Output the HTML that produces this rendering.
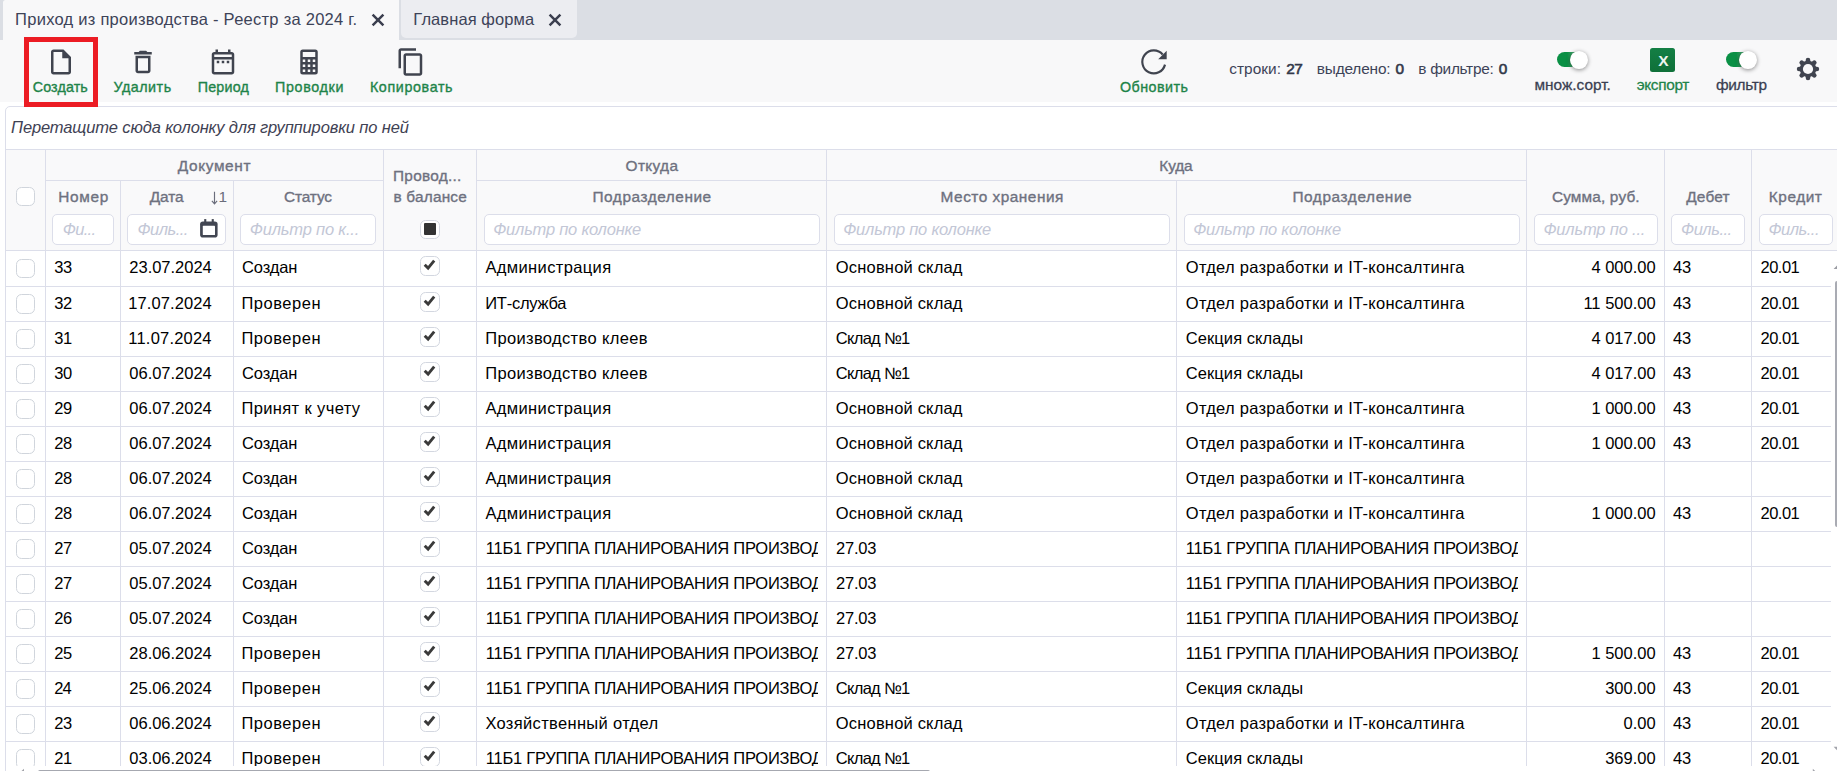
<!DOCTYPE html>
<html lang="ru"><head><meta charset="utf-8"><title>Приход из производства</title>
<style>
html,body{margin:0;padding:0}
body{width:1837px;height:771px;overflow:hidden;position:relative;background:#fff;font-family:"Liberation Sans",sans-serif;color:#000}
div,span,svg{position:absolute;box-sizing:border-box}
span{white-space:pre}
.ic{display:block}
.tabbar{left:0;top:0;width:1837px;height:40px;background:#dbdee4}
.tab1{left:3px;top:0;width:396px;height:40px;background:#f8f8f9;border-radius:2.5px 0 0 0}
.tab2{left:400.5px;top:0;width:176.5px;height:37.8px;background:#ecedf1;border-radius:0 0 5px 5px}
.tab{font-size:16.5px;color:#3d4358;line-height:20px}
.toolbar{left:0;top:40px;width:1837px;height:62px;background:#f8f8f9}
.lbl{font-size:14.3px;color:#1e8449;line-height:18px;-webkit-text-stroke:.35px}
.lbl2{font-size:15.4px;line-height:18px;color:#3a3f52;-webkit-text-stroke:.28px}
.grn{color:#1e8449}
.stat{font-size:15.4px;color:#3d4358;line-height:18px}
.statb{font-size:15.4px;color:#33384a;line-height:18px;-webkit-text-stroke:.6px}
.sn{font-size:15.4px;line-height:20px;color:#6a6d7b}
.xl{font-size:15.5px;font-weight:bold;color:#eef5f0;line-height:20px}
.redbox{left:24px;top:37px;width:74px;height:70px;border:5px solid #ec1c24}
.grid{left:5px;top:106px;width:1840px;height:680px;border:1px solid #dcdeea;border-radius:5px 0 0 0;background:#fff}
.gp{font-size:16.5px;font-style:italic;color:#3f4254;line-height:20px}
.hdr{left:6px;top:149px;width:1831px;height:102px;background:#f9f9fa;border-top:1px solid #dcdeea}
.vl{width:1px;background:#dcdeea}
.hl{height:1px;background:#dcdeea}
.ht{font-size:15.4px;color:#6e717f;line-height:20px;-webkit-text-stroke:.35px}
.fb{top:214px;height:30.6px;border:1px solid #dcdeea;border-radius:5px;background:#fff}
.ph{font-size:16.5px;font-style:italic;color:#c3c7d6;line-height:20px}
.cb{width:18.7px;height:19.8px;border:1px solid #d0d5dc;border-radius:5.5px;background:#fff}
.ck{width:19.4px;height:19.5px;border:1px solid #d3d7e0;border-radius:5.5px;background:#fff}
.c{font-size:16.5px;line-height:20px}
.clip{overflow:hidden;height:30px}
</style></head><body>

<div class="tabbar"></div><div class="tab1"></div><div class="tab2"></div>
<span class="tab" style="left:15.1px;top:9.38px;letter-spacing:0.26px">Приход из производства - Реестр за 2024 г.</span>
<span class="tab" style="left:413.3px;top:9.38px;letter-spacing:0.08px">Главная форма</span>
<svg class="ic" style="left:370.5px;top:12.6px;width:14px;height:14px" viewBox="0 0 14 14"><path d="M1.6 1.7L12.4 12.3M12.4 1.7L1.6 12.3" stroke="#3b3f4f" stroke-width="2.5" fill="none"/></svg>
<svg class="ic" style="left:548.3px;top:12.6px;width:14px;height:14px" viewBox="0 0 14 14"><path d="M1.6 1.7L12.4 12.3M12.4 1.7L1.6 12.3" stroke="#3b3f4f" stroke-width="2.5" fill="none"/></svg>
<div class="toolbar"></div>
<svg class="ic" style="left:45.90px;top:46.75px;width:30px;height:30px" viewBox="0 0 24 24" fill="#40444f"><path d="M14 2H6c-1.1 0-1.99.9-1.99 2L4 20c0 1.1.89 2 1.99 2H18c1.1 0 2-.9 2-2V8l-6-6zM6 20V4h7v5h5v11H6z"/></svg>
<span class="lbl" style="left:32.8px;top:77.75px;letter-spacing:0.10px">Создать</span>
<svg class="ic" style="left:128.00px;top:46.75px;width:30px;height:30px" viewBox="0 0 24 24" fill="#40444f"><path d="M6 19c0 1.1.9 2 2 2h8c1.1 0 2-.9 2-2V7H6v12zM8 9h8v10H8V9zm7.5-5l-1-1h-5l-1 1H5v2h14V4h-3.5z"/></svg>
<span class="lbl" style="left:113.4px;top:77.75px;letter-spacing:0.52px">Удалить</span>
<svg class="ic" style="left:208.00px;top:46.75px;width:30px;height:30px" viewBox="0 0 24 24" fill="#40444f"><path d="M7 11h2v2H7v-2zm14-5v14c0 1.1-.9 2-2 2H5c-1.11 0-2-.9-2-2l.01-14c0-1.1.88-2 1.99-2h1V2h2v2h8V2h2v2h1c1.1 0 2 .9 2 2zM5 8h14V6H5v2zm14 12V10H5v10h14zm-4-7h2v-2h-2v2zm-4 0h2v-2h-2v2z"/></svg>
<span class="lbl" style="left:197.7px;top:77.75px;letter-spacing:0.20px">Период</span>
<svg class="ic" style="left:294.00px;top:46.75px;width:30px;height:30px" viewBox="0 0 24 24" fill="#40444f"><path d="M7,2H17A2,2 0 0,1 19,4V20A2,2 0 0,1 17,22H7A2,2 0 0,1 5,20V4A2,2 0 0,1 7,2M7,4V8H17V4H7M7,10V12H9V10H7M11,10V12H13V10H11M15,10V12H17V10H15M7,14V16H9V14H7M11,14V16H13V14H11M15,14V16H17V14H15M7,18V20H9V18H7M11,18V20H13V18H11M15,18V20H17V18H15Z"/></svg>
<span class="lbl" style="left:275.0px;top:77.75px;letter-spacing:0.66px">Проводки</span>
<svg class="ic" style="left:395.80px;top:46.75px;width:30px;height:30px" viewBox="0 0 24 24" fill="#40444f"><path d="M16 1H4c-1.1 0-2 .9-2 2v14h2V3h12V1zm3 4H8c-1.1 0-2 .9-2 2v14c0 1.1.9 2 2 2h11c1.1 0 2-.9 2-2V7c0-1.1-.9-2-2-2zm0 16H8V7h11v14z"/></svg>
<span class="lbl" style="left:369.9px;top:77.75px;letter-spacing:0.63px">Копировать</span>
<svg class="ic" style="left:1134px;top:42px;width:40px;height:40px" viewBox="1134 42 40 40"><path d="M1165.0 64.63A11.5 11.5 0 1 1 1162.66 54.46" fill="none" stroke="#40444f" stroke-width="2.15"/><path d="M1166.7 50.7V59.2H1158.2Z" fill="#40444f"/></svg>
<span class="lbl" style="left:1120.0px;top:77.75px;letter-spacing:0.47px">Обновить</span>
<span class="stat" style="left:1229.2px;top:60.06px;letter-spacing:0.05px">строки:</span>
<span class="statb" style="left:1286.2px;top:60.06px;letter-spacing:-0.60px">27</span>
<span class="stat" style="left:1316.7px;top:60.06px;letter-spacing:-0.15px">выделено:</span>
<span class="statb" style="left:1395.5px;top:60.06px;letter-spacing:0.00px">0</span>
<span class="stat" style="left:1418.3px;top:60.06px;letter-spacing:-0.28px">в фильтре:</span>
<span class="statb" style="left:1498.8px;top:60.06px;letter-spacing:0.00px">0</span>
<div style="left:1556.8px;top:52px;width:29.5px;height:15px;border-radius:8px;background:linear-gradient(90deg,#0a9045 0%,#0a9045 35%,#4ea672 60%)"></div><div style="left:1569.8px;top:50.8px;width:17.8px;height:17.8px;border-radius:50%;background:#fff;box-shadow:0 1px 4px rgba(0,0,0,.45)"></div>
<div style="left:1725.8px;top:52px;width:29.5px;height:15px;border-radius:8px;background:linear-gradient(90deg,#0a9045 0%,#0a9045 35%,#4ea672 60%)"></div><div style="left:1738.8px;top:50.8px;width:17.8px;height:17.8px;border-radius:50%;background:#fff;box-shadow:0 1px 4px rgba(0,0,0,.45)"></div>
<span class="lbl2" style="left:1534.5px;top:76.06px;letter-spacing:0.01px">множ.сорт.</span>
<span class="lbl2" style="left:1715.9px;top:76.06px;letter-spacing:-0.32px">фильтр</span>
<div style="left:1650.2px;top:47.5px;width:25.2px;height:24.8px;border-radius:2.5px;background:linear-gradient(180deg,#147f45,#0f7039)"></div>
<span class="xl" style="left:1658.2px;top:51.03px;letter-spacing:0.00px">X</span>
<span class="lbl2 grn" style="left:1636.7px;top:76.06px;letter-spacing:-0.32px">экспорт</span>
<svg class="ic" style="left:1794px;top:55px;width:28px;height:28px" viewBox="-14 -14 28 28"><g stroke="#40444f" stroke-width="4.6" stroke-linecap="round"><path d="M0-8.9V8.9M-8.9 0H8.9M-6.3-6.3L6.3 6.3M-6.3 6.3L6.3-6.3"/></g><circle r="8.3" fill="#40444f"/><circle r="5.1" fill="#f8f8f9"/></svg>
<div class="grid"></div>
<span class="gp" style="left:11.1px;top:117.08px;letter-spacing:-0.14px">Перетащите сюда колонку для группировки по ней</span>
<div class="hdr"></div>
<div class="hl" style="left:46px;top:180px;width:337px"></div>
<div class="hl" style="left:477px;top:180px;width:1049px"></div>
<div class="hl" style="left:6px;top:250px;width:1831px"></div>
<div class="vl" style="left:45px;top:149px;height:617px"></div>
<div class="vl" style="left:120px;top:180px;height:586px"></div>
<div class="vl" style="left:233px;top:180px;height:586px"></div>
<div class="vl" style="left:383px;top:149px;height:617px"></div>
<div class="vl" style="left:476px;top:149px;height:617px"></div>
<div class="vl" style="left:826px;top:149px;height:617px"></div>
<div class="vl" style="left:1176px;top:180px;height:586px"></div>
<div class="vl" style="left:1526px;top:149px;height:617px"></div>
<div class="vl" style="left:1664px;top:149px;height:617px"></div>
<div class="vl" style="left:1751px;top:149px;height:617px"></div>
<span class="ht" style="left:177.8px;top:155.66px;letter-spacing:0.63px">Документ</span>
<span class="ht" style="left:625.6px;top:155.66px;letter-spacing:0.34px">Откуда</span>
<span class="ht" style="left:1159.3px;top:155.66px;letter-spacing:-0.13px">Куда</span>
<span class="ht" style="left:58.2px;top:186.66px;letter-spacing:0.70px">Номер</span>
<span class="ht" style="left:149.8px;top:186.66px;letter-spacing:-0.13px">Дата</span>
<span class="ht" style="left:284.0px;top:186.66px;letter-spacing:-0.12px">Статус</span>
<span class="ht" style="left:592.5px;top:186.66px;letter-spacing:0.54px">Подразделение</span>
<span class="ht" style="left:940.6px;top:186.66px;letter-spacing:0.50px">Место хранения</span>
<span class="ht" style="left:1292.4px;top:186.66px;letter-spacing:0.59px">Подразделение</span>
<span class="ht" style="left:1551.9px;top:186.66px;letter-spacing:0.15px">Сумма, руб.</span>
<span class="ht" style="left:1686.3px;top:186.66px;letter-spacing:0.15px">Дебет</span>
<span class="ht" style="left:1768.8px;top:186.66px;letter-spacing:0.54px">Кредит</span>
<span class="ht" style="left:393.0px;top:166.36px;letter-spacing:0.27px">Провод...</span>
<span class="ht" style="left:393.5px;top:186.66px;letter-spacing:0.19px">в балансе</span>
<svg class="ic" style="left:210px;top:190px;width:9px;height:16px" viewBox="210 190 9 16"><path d="M214.5 191.7V203.6M211.9 200.9L214.5 203.9L217.1 200.9" fill="none" stroke="#6a6d7b" stroke-width="1.15"/></svg>
<span class="sn" style="left:218.6px;top:186.66px;letter-spacing:0.00px">1</span>
<div class="fb" style="left:52.3px;width:61.3px"></div>
<span class="ph" style="left:62.7px;top:218.98px;letter-spacing:-0.65px">Фи...</span>
<div class="fb" style="left:127px;width:98.7px"></div>
<span class="ph" style="left:137.4px;top:218.98px;letter-spacing:-0.50px">Филь...</span>
<div class="fb" style="left:240.2px;width:135.4px"></div>
<span class="ph" style="left:249.8px;top:218.98px;letter-spacing:-0.19px">Фильтр по к...</span>
<div class="fb" style="left:484px;width:336.0px"></div>
<span class="ph" style="left:493.2px;top:218.98px;letter-spacing:-0.22px">Фильтр по колонке</span>
<div class="fb" style="left:834px;width:336.0px"></div>
<span class="ph" style="left:843.2px;top:218.98px;letter-spacing:-0.22px">Фильтр по колонке</span>
<div class="fb" style="left:1184px;width:336.0px"></div>
<span class="ph" style="left:1193.2px;top:218.98px;letter-spacing:-0.23px">Фильтр по колонке</span>
<div class="fb" style="left:1534.3px;width:123.5px"></div>
<span class="ph" style="left:1543.4px;top:218.98px;letter-spacing:-0.18px">Фильтр по ...</span>
<div class="fb" style="left:1671px;width:73.9px"></div>
<span class="ph" style="left:1681.0px;top:218.98px;letter-spacing:-0.47px">Филь...</span>
<div class="fb" style="left:1759px;width:73.6px"></div>
<span class="ph" style="left:1768.5px;top:218.98px;letter-spacing:-0.50px">Филь...</span>
<svg class="ic" style="left:198px;top:217px;width:22px;height:23px" viewBox="198 217 22 23"><g fill="#424652"><rect x="200.1" y="221.5" width="17.5" height="16.1" rx="2.8"/><rect x="204.2" y="219.1" width="2.1" height="4"/><rect x="211.7" y="219.1" width="2.1" height="4"/></g><rect x="202.8" y="225.8" width="12.2" height="9.3" rx=".6" fill="#fff"/></svg>
<div class="cb" style="left:16.2px;top:187.2px;height:18.8px"></div>
<div class="ck" style="left:420.3px;top:219.7px"></div><div style="left:423.9px;top:223.4px;width:12.4px;height:12px;background:#333;border-radius:1px"></div>
<div class="cb" style="left:16.2px;top:259.05px;height:18.9px"></div>
<div class="ck" style="left:420.3px;top:256.3px"></div>
<svg class="ic" style="left:423.3px;top:258.2px;width:13px;height:13px" viewBox="0 0 13 13"><path d="M1.7 6.7L5.1 10.1L11.2 2.7" stroke="#3a3a3a" stroke-width="2.9" fill="none"/></svg>
<span class="c" style="left:54.2px;top:257.08px;letter-spacing:-0.30px">33</span>
<span class="c" style="left:129.3px;top:257.08px;letter-spacing:-0.01px">23.07.2024</span>
<span class="c" style="left:242.0px;top:257.08px;letter-spacing:-0.12px">Создан</span>
<span class="c" style="left:485.4px;top:257.08px;letter-spacing:0.37px">Администрация</span>
<span class="c" style="left:835.8px;top:257.08px;letter-spacing:0.18px">Основной склад</span>
<span class="c" style="left:1185.8px;top:257.08px;letter-spacing:0.28px">Отдел разработки и IT-консалтинга</span>
<span class="c" style="right:181.4px;top:257.08px">4 000.00</span>
<span class="c" style="left:1673.0px;top:257.08px;letter-spacing:-0.30px">43</span>
<span class="c" style="left:1760.5px;top:257.08px;letter-spacing:-0.50px">20.01</span>
<div class="hl" style="left:6px;top:285.7px;width:1825px"></div>
<div class="cb" style="left:16.2px;top:294.00px;height:19.85px"></div>
<div class="ck" style="left:420.3px;top:292.3px"></div>
<svg class="ic" style="left:423.3px;top:294.2px;width:13px;height:13px" viewBox="0 0 13 13"><path d="M1.7 6.7L5.1 10.1L11.2 2.7" stroke="#3a3a3a" stroke-width="2.9" fill="none"/></svg>
<span class="c" style="left:54.2px;top:293.03px;letter-spacing:-0.30px">32</span>
<span class="c" style="left:128.3px;top:293.03px;letter-spacing:0.10px">17.07.2024</span>
<span class="c" style="left:241.4px;top:293.03px;letter-spacing:0.53px">Проверен</span>
<span class="c" style="left:485.2px;top:293.03px;letter-spacing:-0.24px">ИТ-служба</span>
<span class="c" style="left:835.8px;top:293.03px;letter-spacing:0.18px">Основной склад</span>
<span class="c" style="left:1185.8px;top:293.03px;letter-spacing:0.28px">Отдел разработки и IT-консалтинга</span>
<span class="c" style="right:181.4px;top:293.03px">11 500.00</span>
<span class="c" style="left:1673.0px;top:293.03px;letter-spacing:-0.30px">43</span>
<span class="c" style="left:1760.5px;top:293.03px;letter-spacing:-0.50px">20.01</span>
<div class="hl" style="left:6px;top:320.7px;width:1825px"></div>
<div class="cb" style="left:16.2px;top:329.00px;height:19.85px"></div>
<div class="ck" style="left:420.3px;top:327.3px"></div>
<svg class="ic" style="left:423.3px;top:329.2px;width:13px;height:13px" viewBox="0 0 13 13"><path d="M1.7 6.7L5.1 10.1L11.2 2.7" stroke="#3a3a3a" stroke-width="2.9" fill="none"/></svg>
<span class="c" style="left:54.2px;top:328.03px;letter-spacing:-0.30px">31</span>
<span class="c" style="left:128.3px;top:328.03px;letter-spacing:0.21px">11.07.2024</span>
<span class="c" style="left:241.4px;top:328.03px;letter-spacing:0.53px">Проверен</span>
<span class="c" style="left:485.2px;top:328.03px;letter-spacing:0.35px">Производство клеев</span>
<span class="c" style="left:835.8px;top:328.03px;letter-spacing:-0.70px">Склад №1</span>
<span class="c" style="left:1185.8px;top:328.03px;letter-spacing:0.07px">Секция склады</span>
<span class="c" style="right:181.4px;top:328.03px">4 017.00</span>
<span class="c" style="left:1673.0px;top:328.03px;letter-spacing:-0.30px">43</span>
<span class="c" style="left:1760.5px;top:328.03px;letter-spacing:-0.50px">20.01</span>
<div class="hl" style="left:6px;top:355.7px;width:1825px"></div>
<div class="cb" style="left:16.2px;top:364.00px;height:19.85px"></div>
<div class="ck" style="left:420.3px;top:362.3px"></div>
<svg class="ic" style="left:423.3px;top:364.2px;width:13px;height:13px" viewBox="0 0 13 13"><path d="M1.7 6.7L5.1 10.1L11.2 2.7" stroke="#3a3a3a" stroke-width="2.9" fill="none"/></svg>
<span class="c" style="left:54.2px;top:363.03px;letter-spacing:-0.30px">30</span>
<span class="c" style="left:129.3px;top:363.03px;letter-spacing:-0.01px">06.07.2024</span>
<span class="c" style="left:242.0px;top:363.03px;letter-spacing:-0.12px">Создан</span>
<span class="c" style="left:485.2px;top:363.03px;letter-spacing:0.35px">Производство клеев</span>
<span class="c" style="left:835.8px;top:363.03px;letter-spacing:-0.70px">Склад №1</span>
<span class="c" style="left:1185.8px;top:363.03px;letter-spacing:0.07px">Секция склады</span>
<span class="c" style="right:181.4px;top:363.03px">4 017.00</span>
<span class="c" style="left:1673.0px;top:363.03px;letter-spacing:-0.30px">43</span>
<span class="c" style="left:1760.5px;top:363.03px;letter-spacing:-0.50px">20.01</span>
<div class="hl" style="left:6px;top:390.7px;width:1825px"></div>
<div class="cb" style="left:16.2px;top:399.00px;height:19.85px"></div>
<div class="ck" style="left:420.3px;top:397.3px"></div>
<svg class="ic" style="left:423.3px;top:399.2px;width:13px;height:13px" viewBox="0 0 13 13"><path d="M1.7 6.7L5.1 10.1L11.2 2.7" stroke="#3a3a3a" stroke-width="2.9" fill="none"/></svg>
<span class="c" style="left:54.2px;top:398.03px;letter-spacing:-0.30px">29</span>
<span class="c" style="left:129.3px;top:398.03px;letter-spacing:-0.01px">06.07.2024</span>
<span class="c" style="left:241.4px;top:398.03px;letter-spacing:0.38px">Принят к учету</span>
<span class="c" style="left:485.4px;top:398.03px;letter-spacing:0.37px">Администрация</span>
<span class="c" style="left:835.8px;top:398.03px;letter-spacing:0.18px">Основной склад</span>
<span class="c" style="left:1185.8px;top:398.03px;letter-spacing:0.28px">Отдел разработки и IT-консалтинга</span>
<span class="c" style="right:181.4px;top:398.03px">1 000.00</span>
<span class="c" style="left:1673.0px;top:398.03px;letter-spacing:-0.30px">43</span>
<span class="c" style="left:1760.5px;top:398.03px;letter-spacing:-0.50px">20.01</span>
<div class="hl" style="left:6px;top:425.7px;width:1825px"></div>
<div class="cb" style="left:16.2px;top:434.00px;height:19.85px"></div>
<div class="ck" style="left:420.3px;top:432.3px"></div>
<svg class="ic" style="left:423.3px;top:434.2px;width:13px;height:13px" viewBox="0 0 13 13"><path d="M1.7 6.7L5.1 10.1L11.2 2.7" stroke="#3a3a3a" stroke-width="2.9" fill="none"/></svg>
<span class="c" style="left:54.2px;top:433.03px;letter-spacing:-0.30px">28</span>
<span class="c" style="left:129.3px;top:433.03px;letter-spacing:-0.01px">06.07.2024</span>
<span class="c" style="left:242.0px;top:433.03px;letter-spacing:-0.12px">Создан</span>
<span class="c" style="left:485.4px;top:433.03px;letter-spacing:0.37px">Администрация</span>
<span class="c" style="left:835.8px;top:433.03px;letter-spacing:0.18px">Основной склад</span>
<span class="c" style="left:1185.8px;top:433.03px;letter-spacing:0.28px">Отдел разработки и IT-консалтинга</span>
<span class="c" style="right:181.4px;top:433.03px">1 000.00</span>
<span class="c" style="left:1673.0px;top:433.03px;letter-spacing:-0.30px">43</span>
<span class="c" style="left:1760.5px;top:433.03px;letter-spacing:-0.50px">20.01</span>
<div class="hl" style="left:6px;top:460.7px;width:1825px"></div>
<div class="cb" style="left:16.2px;top:469.00px;height:19.85px"></div>
<div class="ck" style="left:420.3px;top:467.3px"></div>
<svg class="ic" style="left:423.3px;top:469.2px;width:13px;height:13px" viewBox="0 0 13 13"><path d="M1.7 6.7L5.1 10.1L11.2 2.7" stroke="#3a3a3a" stroke-width="2.9" fill="none"/></svg>
<span class="c" style="left:54.2px;top:468.03px;letter-spacing:-0.30px">28</span>
<span class="c" style="left:129.3px;top:468.03px;letter-spacing:-0.01px">06.07.2024</span>
<span class="c" style="left:242.0px;top:468.03px;letter-spacing:-0.12px">Создан</span>
<span class="c" style="left:485.4px;top:468.03px;letter-spacing:0.37px">Администрация</span>
<span class="c" style="left:835.8px;top:468.03px;letter-spacing:0.18px">Основной склад</span>
<span class="c" style="left:1185.8px;top:468.03px;letter-spacing:0.28px">Отдел разработки и IT-консалтинга</span>
<div class="hl" style="left:6px;top:495.7px;width:1825px"></div>
<div class="cb" style="left:16.2px;top:504.00px;height:19.85px"></div>
<div class="ck" style="left:420.3px;top:502.3px"></div>
<svg class="ic" style="left:423.3px;top:504.2px;width:13px;height:13px" viewBox="0 0 13 13"><path d="M1.7 6.7L5.1 10.1L11.2 2.7" stroke="#3a3a3a" stroke-width="2.9" fill="none"/></svg>
<span class="c" style="left:54.2px;top:503.03px;letter-spacing:-0.30px">28</span>
<span class="c" style="left:129.3px;top:503.03px;letter-spacing:-0.01px">06.07.2024</span>
<span class="c" style="left:242.0px;top:503.03px;letter-spacing:-0.12px">Создан</span>
<span class="c" style="left:485.4px;top:503.03px;letter-spacing:0.37px">Администрация</span>
<span class="c" style="left:835.8px;top:503.03px;letter-spacing:0.18px">Основной склад</span>
<span class="c" style="left:1185.8px;top:503.03px;letter-spacing:0.28px">Отдел разработки и IT-консалтинга</span>
<span class="c" style="right:181.4px;top:503.03px">1 000.00</span>
<span class="c" style="left:1673.0px;top:503.03px;letter-spacing:-0.30px">43</span>
<span class="c" style="left:1760.5px;top:503.03px;letter-spacing:-0.50px">20.01</span>
<div class="hl" style="left:6px;top:530.7px;width:1825px"></div>
<div class="cb" style="left:16.2px;top:539.00px;height:19.85px"></div>
<div class="ck" style="left:420.3px;top:537.3px"></div>
<svg class="ic" style="left:423.3px;top:539.2px;width:13px;height:13px" viewBox="0 0 13 13"><path d="M1.7 6.7L5.1 10.1L11.2 2.7" stroke="#3a3a3a" stroke-width="2.9" fill="none"/></svg>
<span class="c" style="left:54.2px;top:538.03px;letter-spacing:-0.30px">27</span>
<span class="c" style="left:129.3px;top:538.03px;letter-spacing:-0.01px">05.07.2024</span>
<span class="c" style="left:242.0px;top:538.03px;letter-spacing:-0.12px">Создан</span>
<div class="clip" style="left:485.8px;top:534.03px;width:332.2px"><span class="c" style="left:0;top:4px;letter-spacing:-0.25px">11Б1 ГРУППА ПЛАНИРОВАНИЯ ПРОИЗВОДСТВА</span></div>
<span class="c" style="left:836.0px;top:538.03px;letter-spacing:-0.20px">27.03</span>
<div class="clip" style="left:1185.8px;top:534.03px;width:332.2px"><span class="c" style="left:0;top:4px;letter-spacing:-0.25px">11Б1 ГРУППА ПЛАНИРОВАНИЯ ПРОИЗВОДСТВА</span></div>
<div class="hl" style="left:6px;top:565.7px;width:1825px"></div>
<div class="cb" style="left:16.2px;top:574.00px;height:19.85px"></div>
<div class="ck" style="left:420.3px;top:572.3px"></div>
<svg class="ic" style="left:423.3px;top:574.2px;width:13px;height:13px" viewBox="0 0 13 13"><path d="M1.7 6.7L5.1 10.1L11.2 2.7" stroke="#3a3a3a" stroke-width="2.9" fill="none"/></svg>
<span class="c" style="left:54.2px;top:573.03px;letter-spacing:-0.30px">27</span>
<span class="c" style="left:129.3px;top:573.03px;letter-spacing:-0.01px">05.07.2024</span>
<span class="c" style="left:242.0px;top:573.03px;letter-spacing:-0.12px">Создан</span>
<div class="clip" style="left:485.8px;top:569.03px;width:332.2px"><span class="c" style="left:0;top:4px;letter-spacing:-0.25px">11Б1 ГРУППА ПЛАНИРОВАНИЯ ПРОИЗВОДСТВА</span></div>
<span class="c" style="left:836.0px;top:573.03px;letter-spacing:-0.20px">27.03</span>
<div class="clip" style="left:1185.8px;top:569.03px;width:332.2px"><span class="c" style="left:0;top:4px;letter-spacing:-0.25px">11Б1 ГРУППА ПЛАНИРОВАНИЯ ПРОИЗВОДСТВА</span></div>
<div class="hl" style="left:6px;top:600.7px;width:1825px"></div>
<div class="cb" style="left:16.2px;top:609.00px;height:19.85px"></div>
<div class="ck" style="left:420.3px;top:607.3px"></div>
<svg class="ic" style="left:423.3px;top:609.2px;width:13px;height:13px" viewBox="0 0 13 13"><path d="M1.7 6.7L5.1 10.1L11.2 2.7" stroke="#3a3a3a" stroke-width="2.9" fill="none"/></svg>
<span class="c" style="left:54.2px;top:608.03px;letter-spacing:-0.30px">26</span>
<span class="c" style="left:129.3px;top:608.03px;letter-spacing:-0.01px">05.07.2024</span>
<span class="c" style="left:242.0px;top:608.03px;letter-spacing:-0.12px">Создан</span>
<div class="clip" style="left:485.8px;top:604.03px;width:332.2px"><span class="c" style="left:0;top:4px;letter-spacing:-0.25px">11Б1 ГРУППА ПЛАНИРОВАНИЯ ПРОИЗВОДСТВА</span></div>
<span class="c" style="left:836.0px;top:608.03px;letter-spacing:-0.20px">27.03</span>
<div class="clip" style="left:1185.8px;top:604.03px;width:332.2px"><span class="c" style="left:0;top:4px;letter-spacing:-0.25px">11Б1 ГРУППА ПЛАНИРОВАНИЯ ПРОИЗВОДСТВА</span></div>
<div class="hl" style="left:6px;top:635.7px;width:1825px"></div>
<div class="cb" style="left:16.2px;top:644.00px;height:19.85px"></div>
<div class="ck" style="left:420.3px;top:642.3px"></div>
<svg class="ic" style="left:423.3px;top:644.2px;width:13px;height:13px" viewBox="0 0 13 13"><path d="M1.7 6.7L5.1 10.1L11.2 2.7" stroke="#3a3a3a" stroke-width="2.9" fill="none"/></svg>
<span class="c" style="left:54.2px;top:643.03px;letter-spacing:-0.30px">25</span>
<span class="c" style="left:129.3px;top:643.03px;letter-spacing:-0.01px">28.06.2024</span>
<span class="c" style="left:241.4px;top:643.03px;letter-spacing:0.53px">Проверен</span>
<div class="clip" style="left:485.8px;top:639.03px;width:332.2px"><span class="c" style="left:0;top:4px;letter-spacing:-0.25px">11Б1 ГРУППА ПЛАНИРОВАНИЯ ПРОИЗВОДСТВА</span></div>
<span class="c" style="left:836.0px;top:643.03px;letter-spacing:-0.20px">27.03</span>
<div class="clip" style="left:1185.8px;top:639.03px;width:332.2px"><span class="c" style="left:0;top:4px;letter-spacing:-0.25px">11Б1 ГРУППА ПЛАНИРОВАНИЯ ПРОИЗВОДСТВА</span></div>
<span class="c" style="right:181.4px;top:643.03px">1 500.00</span>
<span class="c" style="left:1673.0px;top:643.03px;letter-spacing:-0.30px">43</span>
<span class="c" style="left:1760.5px;top:643.03px;letter-spacing:-0.50px">20.01</span>
<div class="hl" style="left:6px;top:670.7px;width:1825px"></div>
<div class="cb" style="left:16.2px;top:679.00px;height:19.85px"></div>
<div class="ck" style="left:420.3px;top:677.3px"></div>
<svg class="ic" style="left:423.3px;top:679.2px;width:13px;height:13px" viewBox="0 0 13 13"><path d="M1.7 6.7L5.1 10.1L11.2 2.7" stroke="#3a3a3a" stroke-width="2.9" fill="none"/></svg>
<span class="c" style="left:54.2px;top:678.03px;letter-spacing:-0.80px">24</span>
<span class="c" style="left:129.3px;top:678.03px;letter-spacing:-0.01px">25.06.2024</span>
<span class="c" style="left:241.4px;top:678.03px;letter-spacing:0.53px">Проверен</span>
<div class="clip" style="left:485.8px;top:674.03px;width:332.2px"><span class="c" style="left:0;top:4px;letter-spacing:-0.25px">11Б1 ГРУППА ПЛАНИРОВАНИЯ ПРОИЗВОДСТВА</span></div>
<span class="c" style="left:835.8px;top:678.03px;letter-spacing:-0.70px">Склад №1</span>
<span class="c" style="left:1185.8px;top:678.03px;letter-spacing:0.07px">Секция склады</span>
<span class="c" style="right:181.4px;top:678.03px">300.00</span>
<span class="c" style="left:1673.0px;top:678.03px;letter-spacing:-0.30px">43</span>
<span class="c" style="left:1760.5px;top:678.03px;letter-spacing:-0.50px">20.01</span>
<div class="hl" style="left:6px;top:705.7px;width:1825px"></div>
<div class="cb" style="left:16.2px;top:714.00px;height:19.85px"></div>
<div class="ck" style="left:420.3px;top:712.3px"></div>
<svg class="ic" style="left:423.3px;top:714.2px;width:13px;height:13px" viewBox="0 0 13 13"><path d="M1.7 6.7L5.1 10.1L11.2 2.7" stroke="#3a3a3a" stroke-width="2.9" fill="none"/></svg>
<span class="c" style="left:54.2px;top:713.03px;letter-spacing:-0.30px">23</span>
<span class="c" style="left:129.3px;top:713.03px;letter-spacing:-0.01px">06.06.2024</span>
<span class="c" style="left:241.4px;top:713.03px;letter-spacing:0.53px">Проверен</span>
<span class="c" style="left:485.4px;top:713.03px;letter-spacing:0.33px">Хозяйственный отдел</span>
<span class="c" style="left:835.8px;top:713.03px;letter-spacing:0.18px">Основной склад</span>
<span class="c" style="left:1185.8px;top:713.03px;letter-spacing:0.28px">Отдел разработки и IT-консалтинга</span>
<span class="c" style="right:181.4px;top:713.03px">0.00</span>
<span class="c" style="left:1673.0px;top:713.03px;letter-spacing:-0.30px">43</span>
<span class="c" style="left:1760.5px;top:713.03px;letter-spacing:-0.50px">20.01</span>
<div class="hl" style="left:6px;top:740.7px;width:1825px"></div>
<div class="cb" style="left:16.2px;top:749.00px;height:19.85px"></div>
<div class="ck" style="left:420.3px;top:747.3px"></div>
<svg class="ic" style="left:423.3px;top:749.2px;width:13px;height:13px" viewBox="0 0 13 13"><path d="M1.7 6.7L5.1 10.1L11.2 2.7" stroke="#3a3a3a" stroke-width="2.9" fill="none"/></svg>
<span class="c" style="left:54.2px;top:748.03px;letter-spacing:-0.30px">21</span>
<span class="c" style="left:129.3px;top:748.03px;letter-spacing:-0.01px">03.06.2024</span>
<span class="c" style="left:241.4px;top:748.03px;letter-spacing:0.53px">Проверен</span>
<div class="clip" style="left:485.8px;top:744.03px;width:332.2px"><span class="c" style="left:0;top:4px;letter-spacing:-0.25px">11Б1 ГРУППА ПЛАНИРОВАНИЯ ПРОИЗВОДСТВА</span></div>
<span class="c" style="left:835.8px;top:748.03px;letter-spacing:-0.70px">Склад №1</span>
<span class="c" style="left:1185.8px;top:748.03px;letter-spacing:0.07px">Секция склады</span>
<span class="c" style="right:181.4px;top:748.03px">369.00</span>
<span class="c" style="left:1673.0px;top:748.03px;letter-spacing:-0.30px">43</span>
<span class="c" style="left:1760.5px;top:748.03px;letter-spacing:-0.50px">20.01</span>
<div style="left:6px;top:766px;width:1831px;height:5px;background:#fff"></div>
<div style="left:38px;top:769.7px;width:891.5px;height:4px;background:#a6a8b0;border-radius:2px 2px 0 0"></div>
<svg class="ic" style="left:20px;top:767px;width:6px;height:4px" viewBox="0 0 6 4"><path d="M1.5 4L4 1.8V4Z" fill="#a0a2a8"/></svg>
<div style="left:1832px;top:251px;width:5px;height:516px;background:#fff"></div>
<div style="left:1835px;top:281px;width:4px;height:246px;background:#a9abb3;border-radius:3px"></div>
<svg class="ic" style="left:1832px;top:264px;width:5px;height:6px" viewBox="0 0 5 6"><path d="M1.6 5L5 1.6V5Z" fill="#9a9ca3"/></svg>
<svg class="ic" style="left:1832px;top:745px;width:5px;height:6px" viewBox="1832 745 5 6"><path d="M1833.6 746.8H1837V750.2Z" fill="#a2a4ab"/></svg>
<svg class="ic" style="left:1811px;top:767px;width:6px;height:4px" viewBox="1811 767 6 4"><path d="M1812.8 768.8L1815.2 771H1812.8Z" fill="#a2a4ab"/></svg>
<div class="redbox"></div>
</body></html>
